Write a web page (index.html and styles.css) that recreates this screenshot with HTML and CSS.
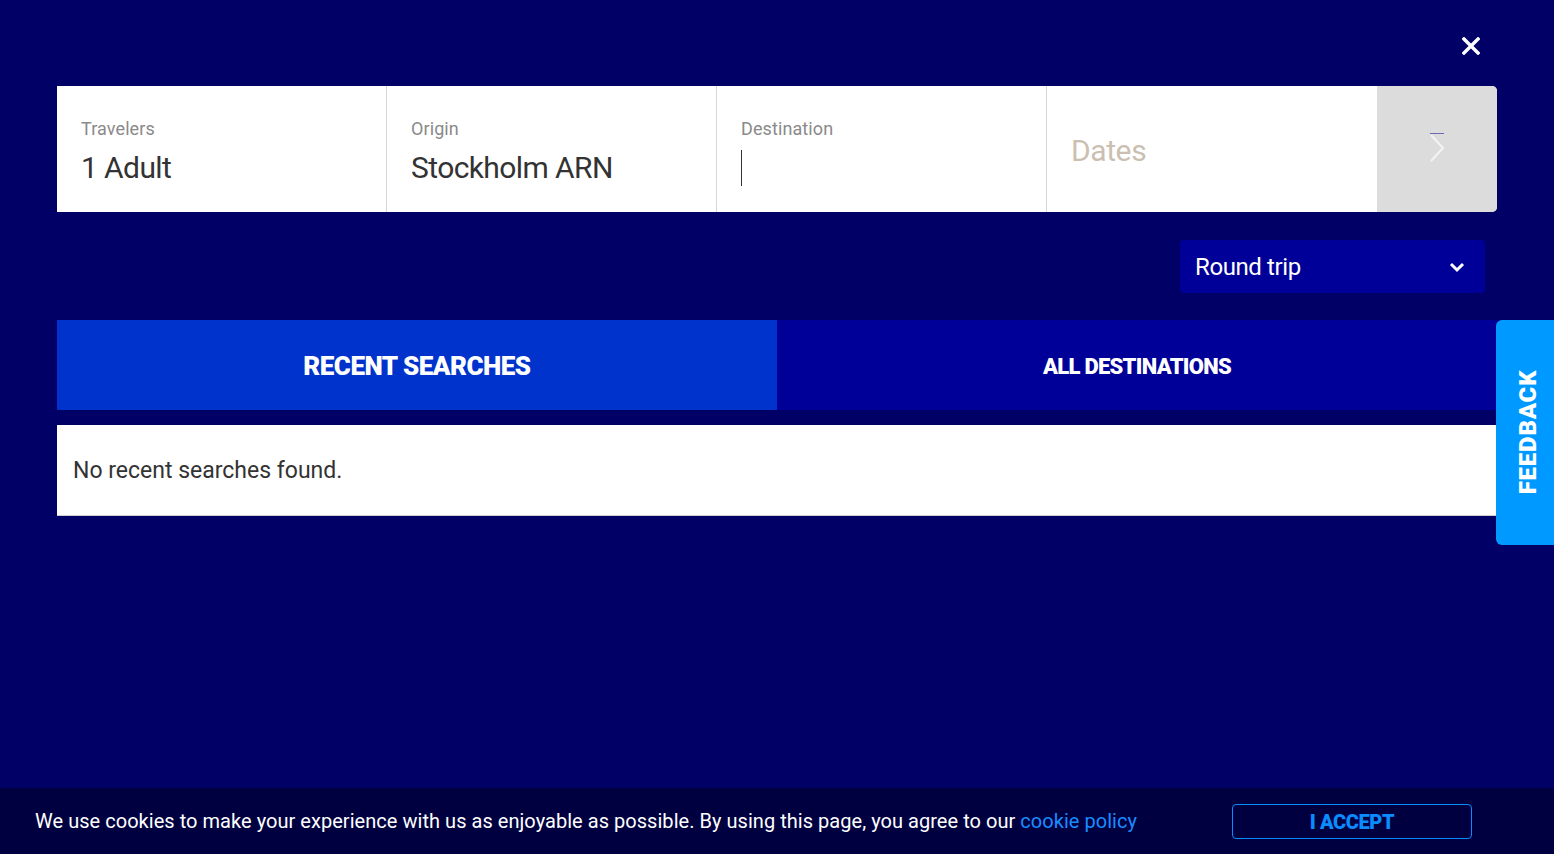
FILE: index.html
```html
<!DOCTYPE html>
<html lang="en">
<head>
<meta charset="utf-8">
<title>Search</title>
<link rel="stylesheet" href="styles.css">
</head>
<body>
<div class="page">
  <div class="topbar">
    <button class="close" aria-label="Close">
      <svg width="18" height="18" viewBox="0 0 18 18"><path d="M2 2 L16 16 M16 2 L2 16" stroke="#fff" stroke-width="3.4" stroke-linecap="square"/></svg>
    </button>
  </div>
  <div class="search">
    <div class="field">
      <div class="label">Travelers</div>
      <div class="value">1 Adult</div>
    </div>
    <div class="field">
      <div class="label">Origin</div>
      <div class="value">Stockholm ARN</div>
    </div>
    <div class="field">
      <div class="label">Destination</div>
      <div class="value"><span class="caret"></span></div>
    </div>
    <div class="field field-dates">
      <div class="placeholder">Dates</div>
    </div>
    <button class="go" aria-label="Next">
      <span class="focusline"></span>
      <svg width="20" height="32" viewBox="0 0 20 32"><path d="M4 3 L16 16 L4 29" fill="none" stroke="#f4f4f4" stroke-width="2"/></svg>
    </button>
  </div>
  <div class="options">
    <div class="select">
      <span>Round trip</span>
      <svg width="18" height="12" viewBox="0 0 18 12"><path d="M3 3 L9 9 L15 3" fill="none" stroke="#fff" stroke-width="3"/></svg>
    </div>
  </div>
  <div class="tabs">
    <div class="tab tab-active">RECENT SEARCHES</div>
    <div class="tab">ALL DESTINATIONS</div>
  </div>
  <div class="panel">No recent searches found.</div>
</div>
<div class="feedback"><span>FEEDBACK</span></div>
<div class="cookie">
  <p>We use cookies to make your experience with us as enjoyable as possible. By using this page, you agree to our <a href="#">cookie policy</a></p>
  <button class="accept">I ACCEPT</button>
</div>
</body>
</html>
```
FILE: styles.css
```css
* { box-sizing: border-box; }
html, body { height: 100%; }
body {
  margin: 0;
  background: #000066;
  font-family: Roboto, "Open Sans", sans-serif;
  overflow: hidden;
}
.page { padding: 0 57px; }
.topbar {
  height: 86px;
  display: flex;
  justify-content: flex-end;
  align-items: flex-start;
  padding-top: 37px;
  padding-right: 17px;
}
.close {
  background: none;
  border: 0;
  padding: 0;
  width: 18px;
  height: 18px;
  cursor: pointer;
}
.search {
  display: flex;
  height: 126px;
  background: #fff;
  border-radius: 0 5px 5px 0;
  overflow: hidden;
}
.field {
  width: 330px;
  border-right: 1px solid #d6d6d6;
  padding: 32px 24px 0;
}
.label {
  font-size: 18px;
  color: #8a8a8a;
  letter-spacing: 0.1px;
  line-height: 22px;
}
.value {
  font-size: 30px;
  color: #333;
  letter-spacing: -0.6px;
  line-height: 36px;
  margin-top: 10px;
  height: 36px;
}
.caret {
  display: inline-block;
  width: 1px;
  height: 36px;
  background: #333;
}
.field-dates { display: flex; align-items: center; padding-top: 0; border-right: 0; }
.placeholder {
  font-size: 30px;
  color: #cbbfb2;
  letter-spacing: -0.4px;
  margin-top: 2px;
}
.go {
  flex: 1;
  background: #dcdcdc;
  border: 0;
  display: flex;
  align-items: center;
  justify-content: center;
  padding: 0;
  position: relative;
}
.go svg { margin-top: -2px; }
.focusline {
  position: absolute;
  left: 53px;
  top: 47px;
  width: 14px;
  height: 1px;
  background: #6b6bb0;
}
.options {
  display: flex;
  justify-content: flex-end;
  padding: 28px 12px 0 0;
}
.select {
  width: 305px;
  height: 53px;
  background: #000099;
  border-radius: 4px;
  display: flex;
  align-items: center;
  justify-content: space-between;
  padding: 0 19px 0 15px;
  color: #fff;
  font-size: 24px;
  letter-spacing: -0.4px;
}
.tabs {
  display: flex;
  margin-top: 27px;
  height: 90px;
}
.tab {
  flex: 1;
  display: flex;
  align-items: center;
  justify-content: center;
  background: #000099;
  color: #fff;
  font-weight: 900;
  font-size: 22px;
  letter-spacing: -0.7px;
  padding-top: 2px;
}
.tab-active {
  background: #0033cc;
  font-size: 26px;
  letter-spacing: -0.5px;
}
.panel {
  margin-top: 15px;
  height: 91px;
  background: #fff;
  border-bottom: 1px solid #cfcfcf;
  display: flex;
  align-items: center;
  padding: 0 16px;
  font-size: 23px;
  color: #333;
  letter-spacing: 0;
}
.feedback {
  position: fixed;
  right: 0;
  top: 320px;
  width: 58px;
  height: 225px;
  background: #0099ff;
  border-radius: 6px 0 0 6px;
  display: flex;
  align-items: center;
  justify-content: center;
  padding-left: 6px;
  padding-bottom: 2px;
}
.feedback span {
  transform: rotate(-90deg);
  color: #fff;
  font-weight: 900;
  font-size: 24px;
  letter-spacing: 0.8px;
  white-space: nowrap;
}
.cookie {
  position: fixed;
  left: 0;
  right: 0;
  bottom: 0;
  height: 66px;
  background: #000040;
  display: flex;
  align-items: center;
  padding: 0 82px 0 35px;
  justify-content: space-between;
}
.cookie p {
  margin: 0;
  color: #fff;
  font-size: 20px;
  letter-spacing: 0.04px;
}
.cookie a { color: #1a8cff; text-decoration: none; }
.accept {
  width: 240px;
  height: 35px;
  background: transparent;
  border: 1px solid #0a8cff;
  border-radius: 4px;
  color: #0a8cff;
  font-family: Roboto, sans-serif;
  font-weight: 900;
  font-size: 20px;
  letter-spacing: -0.4px;
  margin-top: 1px;
}
```
